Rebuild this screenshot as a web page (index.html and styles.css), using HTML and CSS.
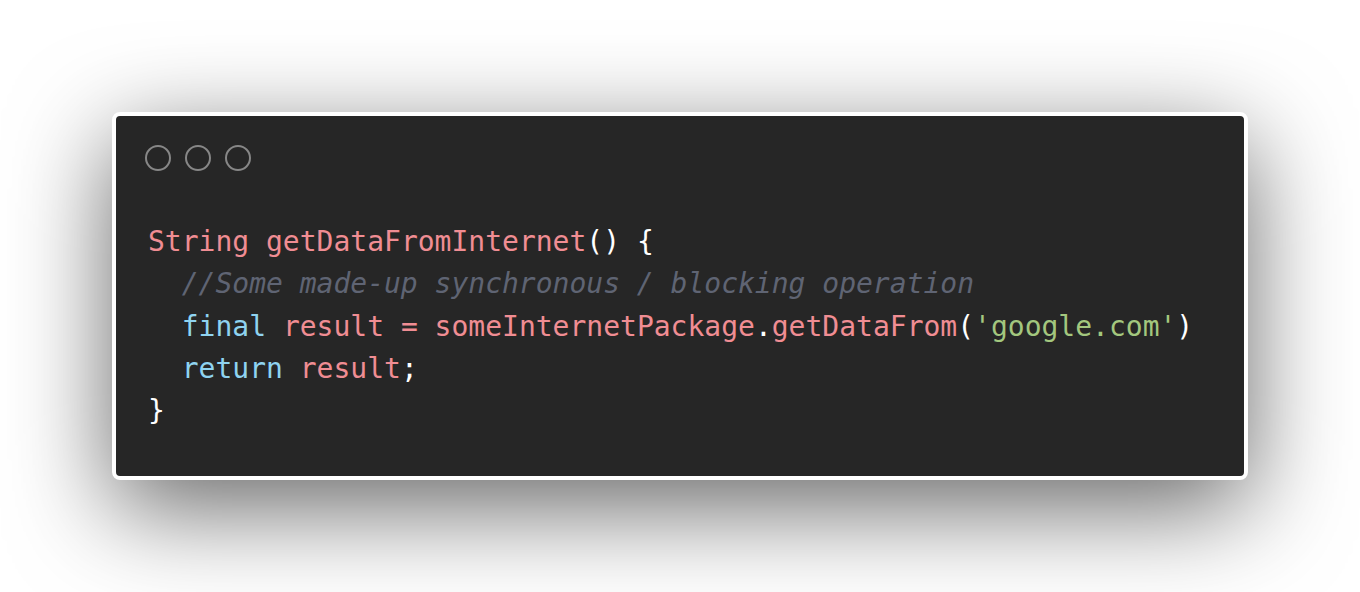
FILE: index.html
```html
<!DOCTYPE html>
<html lang="en">
<head>
<meta charset="utf-8">
<title>Code snippet</title>
<link rel="stylesheet" href="styles.css">
</head>
<body>
<main class="stage">
  <section class="window">
    <header class="controls">
      <span class="dot"></span>
      <span class="dot"></span>
      <span class="dot"></span>
    </header>
    <pre class="code"><code><span class="pk">String</span> <span class="pk">getDataFromInternet</span><span class="pn">()</span> <span class="pn">{</span>
  <span class="cm">//Some made-up synchronous / blocking operation</span>
  <span class="kw">final</span> <span class="pk">result</span> <span class="pk">=</span> <span class="pk">someInternetPackage</span><span class="pn">.</span><span class="pk">getDataFrom</span><span class="pn">(</span><span class="st">'google.com'</span><span class="pn">)</span>
  <span class="kw">return</span> <span class="pk">result</span><span class="pn">;</span>
<span class="pn">}</span></code></pre>
  </section>
</main>
</body>
</html>
```
FILE: styles.css
```css
html, body {
  margin: 0;
  padding: 0;
  background: #ffffff;
}

.stage {
  height: 100vh;
  display: flex;
  align-items: center;
  justify-content: center;
}

.window {
  box-sizing: border-box;
  width: 1136px;
  height: 368px;
  background: #262626;
  border: 4px solid #ffffff;
  border-radius: 8px;
  box-shadow: 0 28px 100px rgba(0, 0, 0, 0.6);
  display: flex;
  flex-direction: column;
}

.controls {
  display: flex;
  gap: 14px;
  padding: 29px 0 0 29px;
}

.dot {
  box-sizing: border-box;
  width: 26px;
  height: 26px;
  border: 2px solid #878787;
  border-radius: 50%;
}

.code {
  margin: 50px 0 0 0;
  padding: 0 0 0 32px;
  font-family: "DejaVu Sans Mono", monospace;
  font-size: 28px;
  line-height: 42.3px;
  color: #ffffff;
  white-space: pre;
}

.code code {
  font-family: inherit;
}

.pk { color: #f08d93; }
.pn { color: #ffffff; }
.kw { color: #8fd3f0; }
.st { color: #a3c77e; }
.cm { color: #5f6473; font-style: italic; }
```
